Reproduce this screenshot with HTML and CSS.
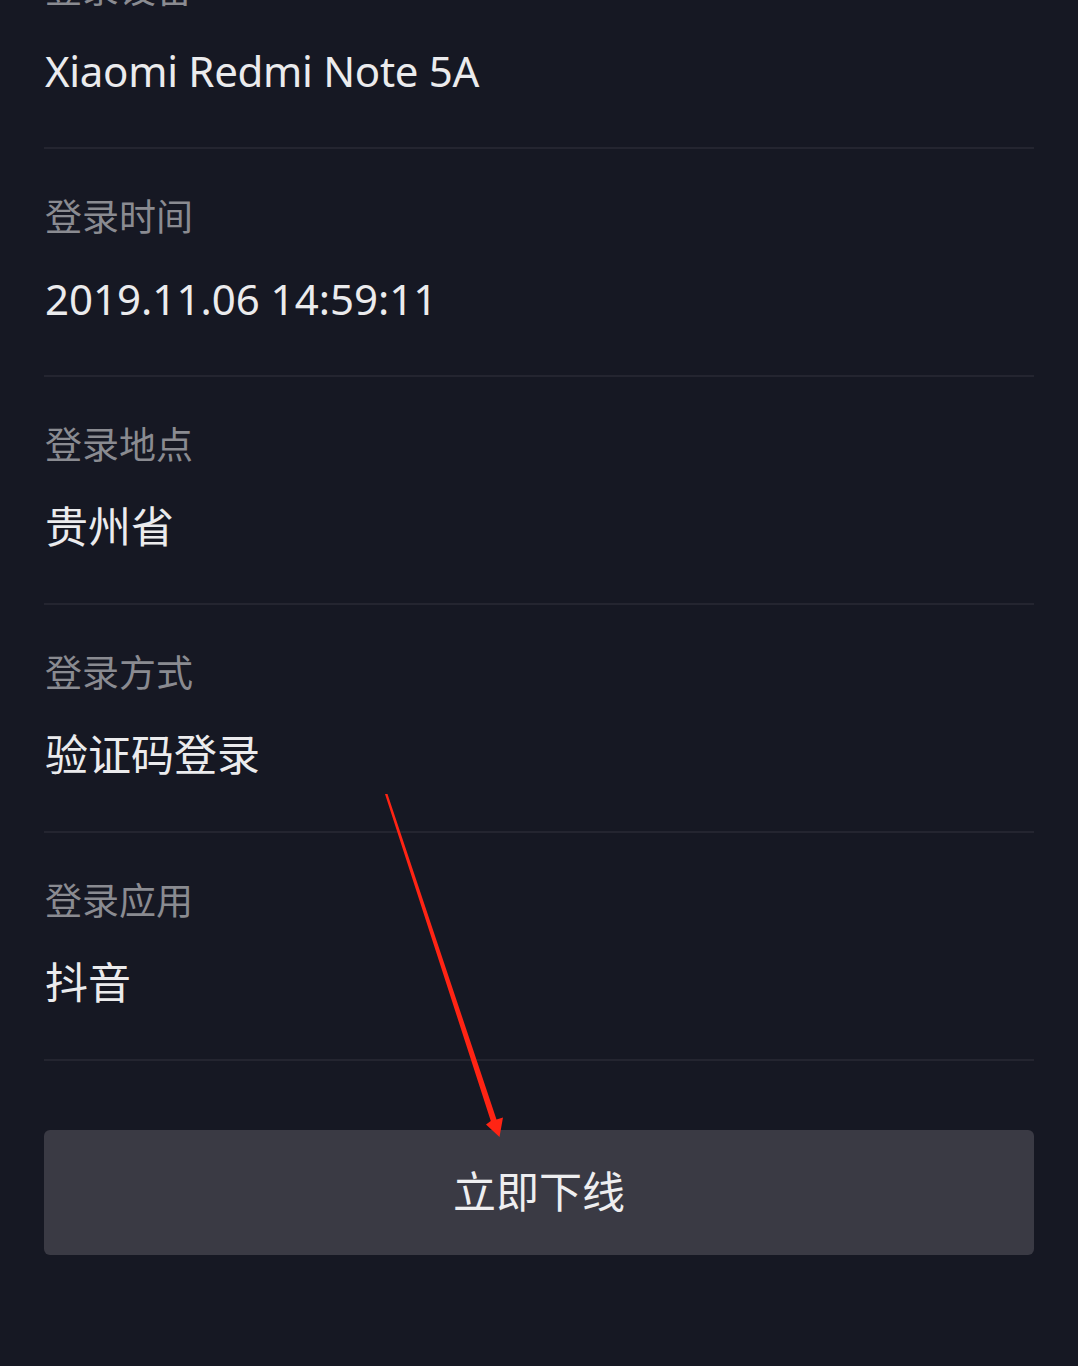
FILE: index.html
```html
<!DOCTYPE html>
<html lang="zh-CN">
<head>
<meta charset="utf-8">
<title>登录设备详情</title>
<link rel="stylesheet" href="styles.css">
</head>
<body>
<main class="page">
  <section class="list">
    <div class="item">
      <div class="label">登录设备</div>
      <div class="value latin device">Xiaomi Redmi Note 5A</div>
    </div>
    <div class="item">
      <div class="label">登录时间</div>
      <div class="value latin">2019.11.06 14:59:11</div>
    </div>
    <div class="item">
      <div class="label">登录地点</div>
      <div class="value">贵州省</div>
    </div>
    <div class="item">
      <div class="label">登录方式</div>
      <div class="value">验证码登录</div>
    </div>
    <div class="item">
      <div class="label">登录应用</div>
      <div class="value">抖音</div>
    </div>
  </section>
  <button class="offline">立即下线</button>
</main>
<svg class="arrow" width="1078" height="1366" viewBox="0 0 1078 1366" aria-hidden="true">
  <polygon fill="#ff2414" points="385,794 387.5,794 496.5,1119.5 503,1117.5 499.5,1137 486,1124.5 490.8,1121"/>
</svg>
</body>
</html>
```

FILE: styles.css
```css
html, body {
  margin: 0;
  padding: 0;
  background: #161823;
}
body {
  font-family: "Noto Sans", "Noto Sans CJK SC", sans-serif;
  width: 1078px;
  height: 1366px;
  overflow: hidden;
  position: relative;
}
.page {
  display: flex;
  flex-direction: column;
  padding: 0 44px;
  margin-top: -79px;
}
.list {
  display: flex;
  flex-direction: column;
}
.item {
  height: 228px;
  box-sizing: border-box;
  border-bottom: 2px solid #242530;
  display: flex;
  flex-direction: column;
}
.label {
  margin-top: 43px;
  height: 50px;
  line-height: 50px;
  font-size: 37px;
  color: #8a8b91;
  padding-left: 1px;
}
.value {
  margin-top: 27px;
  height: 60px;
  line-height: 60px;
  font-size: 43px;
  color: #ebebed;
  padding-left: 1px;
}
.value.latin {
  font-size: 42px;
}
.value.device {
  letter-spacing: -0.3px;
}
.offline {
  margin-top: 69px;
  height: 125px;
  border: none;
  border-radius: 6px;
  background: #3a3a44;
  color: #eeeef0;
  font-family: "Noto Sans CJK SC", sans-serif;
  font-size: 43px;
  padding: 0 0 7px;
  cursor: pointer;
}
.arrow {
  position: absolute;
  left: 0;
  top: 0;
  pointer-events: none;
}
```
